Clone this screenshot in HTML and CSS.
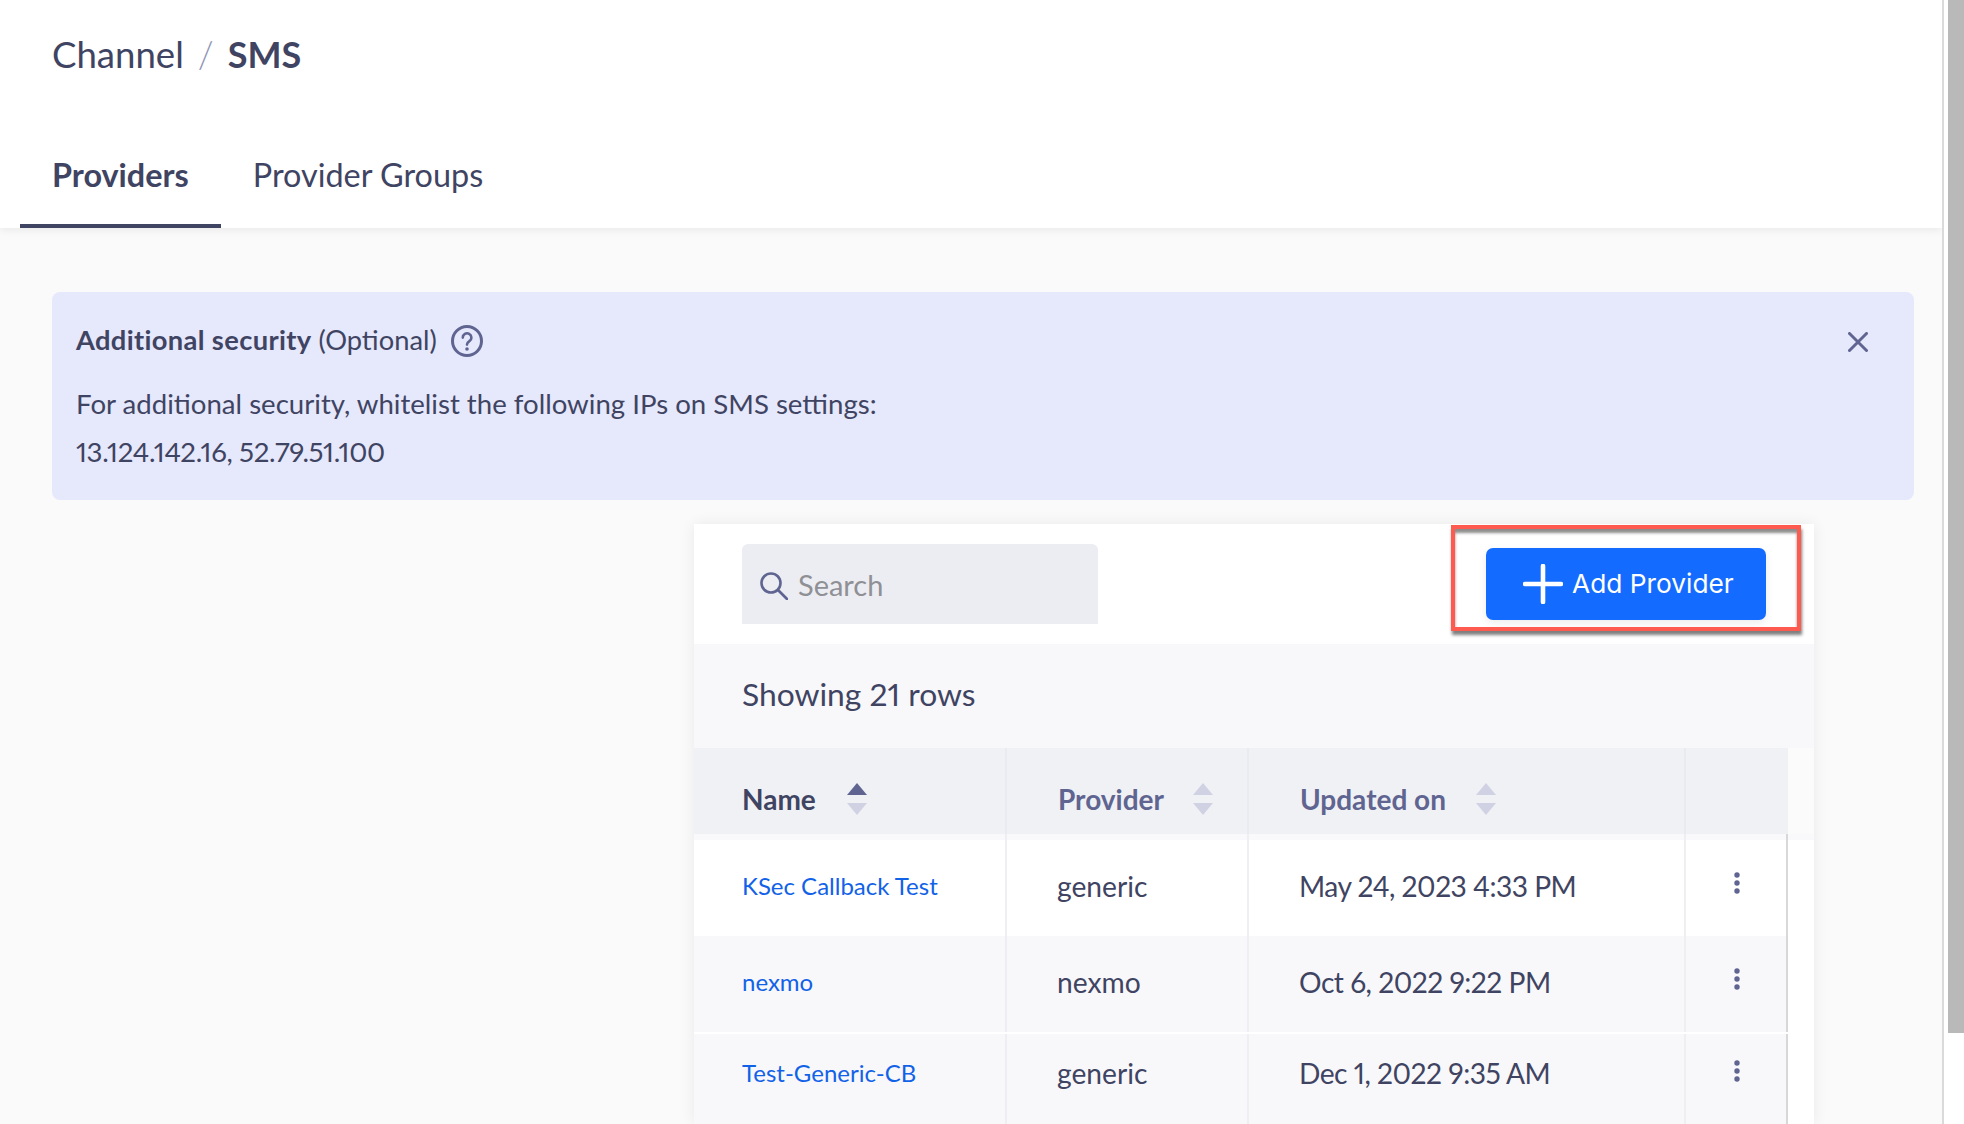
FILE: index.html
```html
<!DOCTYPE html>
<html lang="en">
<head>
<meta charset="utf-8">
<title>Channel / SMS</title>
<link rel="stylesheet" href="styles.css">
</head>
<body>
<div class="app">
  <main class="main">
    <header class="header">
      <div class="crumbs"><span>Channel</span><span class="sep">/</span><strong>SMS</strong></div>
      <nav class="tabs">
        <a class="tab active">Providers</a>
        <a class="tab">Provider Groups</a>
      </nav>
    </header>
    <section class="content">
      <div class="notice">
        <div class="notice-body">
          <div class="notice-title"><span><strong>Additional security</strong> (Optional)</span>
            <svg class="help" viewBox="0 0 32 32"><circle cx="16" cy="16" r="14.5" fill="none" stroke="#5f6590" stroke-width="3"/><path d="M11.8 12.6a4.3 4.3 0 1 1 6.6 3.6c-1.5 1-2.4 1.7-2.4 3.4" fill="none" stroke="#5f6590" stroke-width="2.6" stroke-linecap="round"/><circle cx="16" cy="24" r="1.8" fill="#5f6590"/></svg>
          </div>
          <p class="notice-line first">For additional security, whitelist the following IPs on SMS settings:</p>
          <p class="notice-line ips">13.124.142.16, 52.79.51.100</p>
        </div>
        <svg class="close" viewBox="0 0 20 20"><path d="M1.5 1.5l17 17M18.5 1.5l-17 17" stroke="#5f6590" stroke-width="3" stroke-linecap="round"/></svg>
      </div>
      <div class="card">
        <div class="toolbar">
          <div class="search">
            <svg class="search-icon" viewBox="0 0 28 28"><circle cx="11" cy="11" r="9.5" fill="none" stroke="#5f6590" stroke-width="2.6"/><path d="M18 18l9 9" stroke="#5f6590" stroke-width="2.8" stroke-linecap="round"/></svg>
            <span>Search</span>
          </div>
          <button class="add-btn">
            <svg class="plus" viewBox="0 0 40 40"><path d="M20 2v36M2 20h36" stroke="#fff" stroke-width="4.6" stroke-linecap="round"/></svg>
            <span class="add-label">Add Provider</span>
          </button>
          <div class="annotation"></div>
        </div>
        <div class="count">Showing 21 rows</div>
        <div class="thead">
          <div class="th th-name">Name<svg class="sort" viewBox="0 0 20 32"><path d="M10 0l10 12H0z" fill="#5f6590"/><path d="M10 32L0 20h20z" fill="#d0d1e2"/></svg></div>
          <div class="th">Provider<svg class="sort" viewBox="0 0 20 32"><path d="M10 0l10 12H0z" fill="#d0d1e2"/><path d="M10 32L0 20h20z" fill="#d0d1e2"/></svg></div>
          <div class="th">Updated on<svg class="sort" viewBox="0 0 20 32"><path d="M10 0l10 12H0z" fill="#d0d1e2"/><path d="M10 32L0 20h20z" fill="#d0d1e2"/></svg></div>
          <div class="th"></div>
        </div>
        <div class="band"><i></i><i></i><i></i><i></i></div>
        <div class="row">
          <div class="td"><a class="link">KSec Callback Test</a></div>
          <div class="td">generic</div>
          <div class="td">May 24, 2023 4:33 PM</div>
          <div class="td td-menu"><svg class="dots" viewBox="0 0 6 22"><circle cx="3" cy="3" r="2.7"/><circle cx="3" cy="11" r="2.7"/><circle cx="3" cy="19" r="2.7"/></svg></div>
        </div>
        <div class="row alt">
          <div class="td"><a class="link">nexmo</a></div>
          <div class="td">nexmo</div>
          <div class="td">Oct 6, 2022 9:22 PM</div>
          <div class="td td-menu"><svg class="dots" viewBox="0 0 6 22"><circle cx="3" cy="3" r="2.7"/><circle cx="3" cy="11" r="2.7"/><circle cx="3" cy="19" r="2.7"/></svg></div>
        </div>
        <div class="row alt last">
          <div class="td"><a class="link">Test-Generic-CB</a></div>
          <div class="td">generic</div>
          <div class="td">Dec 1, 2022 9:35 AM</div>
          <div class="td td-menu"><svg class="dots" viewBox="0 0 6 22"><circle cx="3" cy="3" r="2.7"/><circle cx="3" cy="11" r="2.7"/><circle cx="3" cy="19" r="2.7"/></svg></div>
        </div>
      </div>
    </section>
  </main>
  <div class="scroll-track"><div class="scroll-thumb"></div></div>
</div>
</body>
</html>
```
FILE: styles.css
```css
* { box-sizing: border-box; }
html, body { margin: 0; height: 100%; overflow: hidden; background: #fff; }
body { font-family: "Lato", "Liberation Sans", sans-serif; color: #3f4462; font-variant-numeric: proportional-nums; }

.app { display: flex; height: 1124px; overflow: hidden; }
.main { width: 1944px; flex: none; border-right: 2px solid #dadada; background: #fafafa; overflow: hidden; }
.scroll-track { flex: 1; padding-left: 4px; }
.scroll-thumb { height: 1033px; background: #b9b9b9; }

.header { height: 228px; background: #fff; box-shadow: 0 2px 8px rgba(0, 0, 0, .07); position: relative; padding-left: 20px; display: flex; flex-direction: column; }
.crumbs { height: 110px; padding: 34px 0 0 32px; font-size: 36.6px; line-height: 40px; display: flex; }
.crumbs strong { font-weight: 700; font-size: 36px; }
.sep { color: #8f94b5; margin: 0 14px; font-weight: 300; }
.tabs { display: flex; height: 118px; }
.tab { font-size: 32.4px; padding: 45px 32px 0; line-height: 40px; }
.tab.active { font-weight: 700; border-bottom: 4px solid #3f4462; }

.content { padding: 64px 28px 0 52px; }
.notice { height: 208px; width: 1862px; background: #e6e8fc; border-radius: 8px; padding: 30px 46px 0 24px; display: flex; justify-content: space-between; align-items: flex-start; }
.notice-title { font-size: 27.3px; line-height: 36px; display: flex; align-items: center; }
.notice-title strong { font-weight: 700; letter-spacing: .35px; }
.help { width: 32px; height: 32px; margin-left: 14px; margin-top: 2px; }
.notice-line { margin: 0; font-size: 27.6px; line-height: 48px; }
.notice-line.first { margin-top: 22px; }
.notice-line.ips { letter-spacing: -.33px; }
.close { width: 20px; height: 20px; margin-top: 10px; }

.card { width: 1120px; margin: 24px 0 0 642px; background: #fff; box-shadow: 0 0 14px rgba(0, 0, 0, .07); }
.toolbar { height: 120px; position: relative; padding: 20px 48px 0 48px; display: flex; justify-content: space-between; align-items: flex-start; }
.search { width: 356px; height: 80px; background: #ecedf2; border-radius: 6px 6px 0 0; display: flex; align-items: center; padding-left: 18px; font-size: 29px; color: #8f9095; }
.search-icon { width: 28px; height: 28px; margin-right: 10px; margin-top: 4px; }
.add-btn { width: 280px; height: 72px; margin-top: 4px; border: 0; border-radius: 7px; background: #136cff; color: #fff; font: 400 26.3px "Inter", sans-serif; display: flex; align-items: center; padding: 0 0 0 37px; box-shadow: 0 3px 8px rgba(0, 0, 0, .08); }
.plus { width: 40px; height: 40px; margin-right: 9px; flex: none; }
.add-label { margin-top: -2px; }
.annotation { position: absolute; left: 757px; top: 1px; width: 350px; height: 106px; border: 4px solid #ff5a4f; box-shadow: 1px 4px 3px rgba(0, 0, 0, .5), inset 0 4px 3px rgba(0, 0, 0, .45); }

.count { height: 104px; background: #f8f8fb; padding-left: 48px; font-size: 31.8px; line-height: 100px; }

.thead, .row, .band { display: grid; grid-template-columns: 313px 242px 437px 102px 26px; }
.thead { height: 86px; background: #fbfbfb; }
.th { background: #f0f1f5; border-right: 2px solid #eaebf0; display: flex; align-items: center; padding: 16px 0 0 51px; font-size: 28px; font-weight: 700; color: #5f6590; }
.th-name { padding-left: 48px; color: #3f4462; }
.th:last-child { border-right: 0; }
.sort { width: 20px; height: 32px; margin-left: 29px; }
.th:nth-child(3) .sort { margin-left: 30px; }
.th-name .sort { margin-left: 31px; }

.band { height: 6px; background: #f9f9fb; }
.band i { border-right: 2px solid #eeeef3; }
.band i:nth-child(4) { border-right-color: #d8d8d8; }

.row { height: 96px; background: #fff; }
.row::after { content: ""; background: #fff; }
.td { border-right: 2px solid #eeeef3; display: flex; align-items: center; padding: 0 0 4px 50px; font-size: 28.2px; }
.td:first-child { padding-left: 48px; }
.td:nth-child(3) { letter-spacing: -.5px; }
.td:nth-child(4) { border-right-color: #d8d8d8; }
.alt .td { background: #f8f8fb; }
.last { height: 90px; margin-top: 2px; }
.last .td { padding-bottom: 12px; }
.link { color: #1262e8; font-size: 24px; margin-top: -2px; }
.row .td-menu { padding: 0 0 10px 48px; }
.last .td-menu { padding-bottom: 16px; }
.dots { width: 6px; height: 22px; fill: #5f6590; }
```
